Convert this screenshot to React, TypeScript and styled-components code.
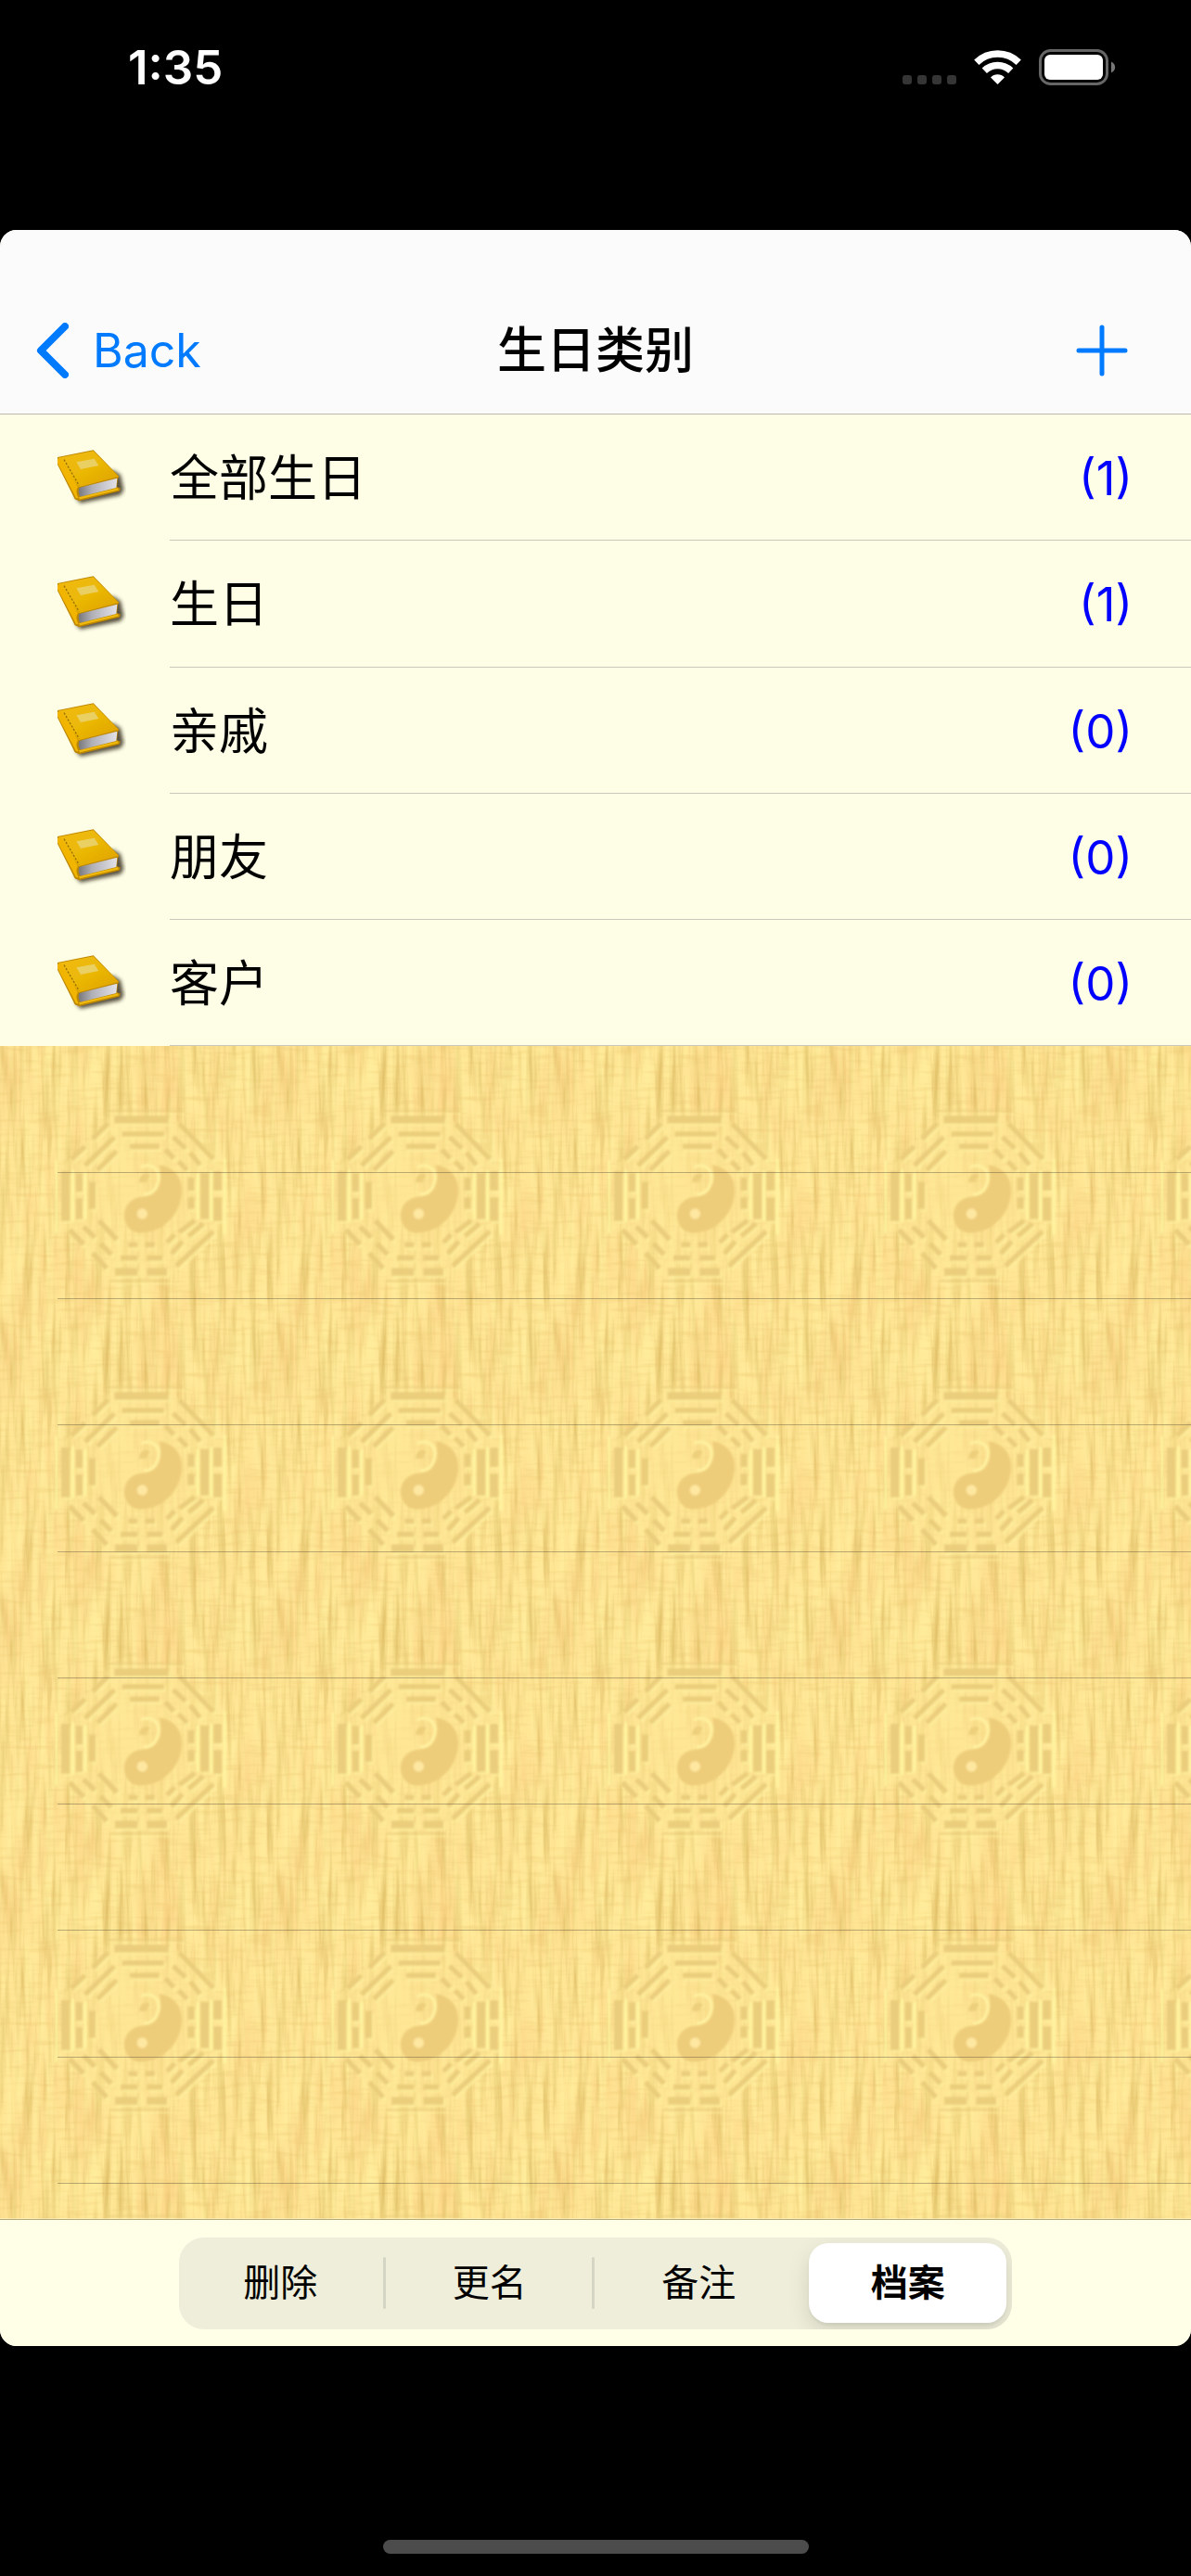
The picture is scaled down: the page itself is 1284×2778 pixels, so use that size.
import React, { useState } from "react";
import styled, { createGlobalStyle } from "styled-components";

const LATIN = `Inter, "Noto Sans CJK SC", sans-serif`;

const GlobalStyle = createGlobalStyle`
  * { box-sizing: border-box; }
  body { margin: 0; background: #000; font-family: ${LATIN}; }
  button { font: inherit; border: 0; background: none; padding: 0; cursor: pointer; }
  ul { list-style: none; margin: 0; padding: 0; }
`;

const Screen = styled.div`
  display: flex;
  flex-direction: column;
  min-height: 100vh;
  background: #000;
`;

const StatusBar = styled.header`
  display: flex;
  justify-content: space-between;
  align-items: flex-start;
  height: 248px;
  padding: 42px 81px 0 138px;
  color: #fff;
`;

const Clock = styled.time`
  font-size: 51px;
  line-height: 62px;
  font-weight: 600;
`;

const StatusIcons = styled.div`
  display: flex;
  align-items: center;
  height: 62px;
`;

const Sheet = styled.main`
  display: flex;
  flex-direction: column;
  flex: 1;
  overflow: hidden;
  border-radius: 18px;
  background: #fefee7;
`;

const NavBar = styled.nav`
  display: grid;
  grid-template-columns: 1fr auto 1fr;
  align-items: center;
  height: 199px;
  padding: 62px 38px 0;
  background: #fbfbfc;
  border-bottom: 1px solid #b9b9ad;
`;

const BackButton = styled.button`
  justify-self: start;
  display: flex;
  align-items: center;
  gap: 26px;
  color: #007aff;
  font-size: 50px;
  line-height: 64px;
`;

const Title = styled.h1`
  margin: 0;
  font-size: 53px;
  line-height: 64px;
  font-weight: 500;
`;

const AddButton = styled.button`
  justify-self: end;
  display: flex;
  padding: 0 30px;
`;

const ListArea = styled.section`
  display: flex;
  flex-direction: column;
  flex: 1;
`;

const Categories = styled.ul`
  display: flex;
  flex-direction: column;
  flex: 5 0 0px;
`;

const Category = styled.li`
  display: flex;
  flex: 1 0 0px;
  align-items: stretch;
  gap: 47px;
  min-height: 120px;
  padding-left: 62px;

  > svg { align-self: center; }
`;

const CategoryButton = styled.button`
  display: flex;
  flex: 1;
  align-items: center;
  justify-content: space-between;
  padding: 3px 63px 0 0;
  border-bottom: 1px solid #c9c9bb;
  color: #000;
  font-size: 53px;
  line-height: 64px;
`;

const Count = styled.span`
  color: #0000ff;
  font-size: 51px;
`;

const EmptyArea = styled.div`
  position: relative;
  display: flex;
  flex: 9 0 38px;
  padding-bottom: 38px;
`;

const Wood = styled.svg`
  position: absolute;
  inset: 0;
  width: 100%;
  height: 100%;
`;

const EmptyRows = styled.ul`
  position: relative;
  display: flex;
  flex-direction: column;
  flex: 1;
  padding-left: 62px;
`;

const EmptyRow = styled.li`
  flex: 1 0 0px;
  border-bottom: 1px solid rgba(70, 65, 50, 0.38);
`;

const Toolbar = styled.footer`
  display: flex;
  justify-content: center;
  height: 137px;
  padding-top: 19px;
  background: #fffee6;
  border-top: 1px solid #b8a874;
`;

const Segments = styled.div`
  display: grid;
  grid-template-columns: repeat(4, 1fr);
  gap: 3px;
  width: 70%;
  height: 99px;
  padding: 6px 0 7px;
  border-radius: 27px;
  background: #eeeeda;
  overflow: hidden;
`;

const Segment = styled.button<{ $active: boolean; $divided: boolean }>`
  position: relative;
  border-radius: 21px;
  font-size: 40px;
  line-height: 50px;
  color: #000;
  font-weight: ${(p) => (p.$active ? 600 : 400)};
  ${(p) =>
    p.$active
      ? "margin: 0 6px 0 3px; background: #fff; box-shadow: 0 9px 24px rgba(0,0,0,.12), 0 3px 3px rgba(0,0,0,.05);"
      : "padding-right: 3px;"}

  &::after {
    content: "";
    display: ${(p) => (p.$divided ? "block" : "none")};
    position: absolute;
    top: 15px;
    bottom: 15px;
    right: -1px;
    width: 3px;
    border-radius: 2px;
    background: #d5d5c6;
  }
`;

const HomeArea = styled.div`
  display: flex;
  justify-content: center;
  align-items: flex-end;
  height: 248px;
  padding-bottom: 24px;
`;

const HomeIndicator = styled.div`
  width: 459px;
  height: 15px;
  border-radius: 8px;
  background: #4c4c4c;
`;

function DeviceStatus() {
  return (
    <svg width="230" height="40" viewBox="973 53 230 40" role="img" aria-label="Wi-Fi, battery full">
      {[973, 989, 1005, 1021].map((x) => (
        <rect key={x} x={x} y="81" width="10" height="10" rx="3" fill="#353535" />
      ))}
      <g fill="none" stroke="#fff" strokeWidth="7.5">
        <path d="M1052.8 67.2 A32.5 32.5 0 0 1 1098.2 67.2" />
        <path d="M1061.3 76.2 A20.5 20.5 0 0 1 1089.7 76.2" />
      </g>
      <path d="M1068 83.5 A10.5 10.5 0 0 1 1083 83.5 L1075.5 91Z" fill="#fff" />
      <rect x="1121.5" y="54.5" width="72" height="36" rx="11" fill="none" stroke="#666" strokeWidth="3" />
      <rect x="1126" y="59" width="63" height="27" rx="6" fill="#fff" />
      <path d="M1198 66.5 C1203.5 69 1203.5 76 1198 78.5Z" fill="#777" />
    </svg>
  );
}

function Book() {
  return (
    <svg width="74" height="70" viewBox="36 15 222 210" aria-hidden="true">
      <defs>
        <linearGradient id="cover" x1="0" y1="0" x2="1" y2="1">
          <stop offset="0" stopColor="#f2ba10" />
          <stop offset=".5" stopColor="#ebb806" />
          <stop offset="1" stopColor="#dda000" />
        </linearGradient>
        <linearGradient id="pages" x1="0" x2="1">
          <stop offset="0" stopColor="#77777b" />
          <stop offset=".35" stopColor="#b0b0b6" />
          <stop offset="1" stopColor="#e2e2e8" />
        </linearGradient>
        <filter id="soft" x="-20%" y="-20%" width="140%" height="140%">
          <feGaussianBlur stdDeviation="6" />
        </filter>
        <filter id="edge"><feGaussianBlur stdDeviation="1.6" /></filter>
      </defs>
      <path d="M92 180 L110 203 L240 176 L250 160 L240 112 L215 96Z" fill="#3a3320" opacity=".85" filter="url(#soft)" />
      <g filter="url(#edge)">
        <path d="M36 54 L152 31 L236 117 L231 124 L228 150 L240 155 L236 164 L106 196 L92 190 L36 78Z" fill="#bd8600" />
        <path d="M106 153 L229 122 L226 153 L110 182 Q100 168 106 153Z" fill="url(#pages)" />
        <path d="M38 56 L152 34 L234 117 L104 151Z" fill="url(#cover)" />
        <path d="M36 60 L48 58 L102 151 Q92 166 104 186 L96 187 L36 73Z" fill="#f1b500" />
        <path d="M106 187 L232 157" stroke="#f0b90a" strokeWidth="7" />
        <path d="M57 62 L106 146" stroke="#9b7000" strokeWidth="4" strokeDasharray="7 5" />
        <path d="M97 70 L155 59 L169 81 L111 93Z" fill="#ead063" />
      </g>
    </svg>
  );
}

function TrigramMarks() {
  return (
    <>
      <path strokeWidth="5" d="M345 210H595 M355 760H545" />
      <path strokeWidth="25" d="M370 238H545 M372 731H445 M475 731H540" />
      <path strokeWidth="17" d="M395 285H530 M420 325H515 M390 686H445 M475 686H525 M415 643H445 M470 643H500" />
      <path strokeWidth="28" d="M212 405V566 M662 410V560 M704 405V468 M704 490V566" />
      <path strokeWidth="22" d="M256 412V472 M256 492V560 M298 440V527 M618 425V468 M618 490V527" />
      <path strokeWidth="16" d="M580 252L690 366 M560 295L600 332 M615 345L647 385 M535 335L562 364 M578 374L605 402" />
      <path strokeWidth="16" d="M350 250L300 300 M275 325L230 367 M370 295L275 387 M377 340L315 402" />
      <path strokeWidth="17" d="M320 565L378 627 M270 585L307 620 M325 640L360 675 M225 595L270 642 M300 670L345 720" />
      <path strokeWidth="16" d="M630 565L580 602 M565 610L540 636 M657 575L610 615 M590 632L555 672 M690 600L570 712" />
    </>
  );
}

function WoodBackground() {
  return (
    <Wood aria-hidden="true">
      <defs>
        <filter id="grain" x="0" y="0" width="100%" height="100%" colorInterpolationFilters="sRGB">
          <feTurbulence type="fractalNoise" baseFrequency="0.14 0.01" numOctaves={3} seed={7} stitchTiles="stitch" />
          <feColorMatrix values="0 0 0 0 .82  0 0 0 0 .68  0 0 0 0 .32  1.5 0 0 0 -.66" />
        </filter>
        <filter id="shine" x="0" y="0" width="100%" height="100%" colorInterpolationFilters="sRGB">
          <feTurbulence type="fractalNoise" baseFrequency="0.12 0.014" numOctaves={2} seed={21} stitchTiles="stitch" />
          <feColorMatrix values="0 0 0 0 1  0 0 0 0 .94  0 0 0 0 .62  1.6 0 0 0 -.6" />
        </filter>
        <filter id="blotch" x="0" y="0" width="100%" height="100%" colorInterpolationFilters="sRGB">
          <feTurbulence type="fractalNoise" baseFrequency="0.02 0.01" numOctaves={3} seed={4} stitchTiles="stitch" />
          <feColorMatrix values="0 0 0 0 .98  0 0 0 0 .8  0 0 0 0 .5  1.4 0 0 0 -.58" />
        </filter>
        <filter id="weave" x="0" y="0" width="100%" height="100%" colorInterpolationFilters="sRGB">
          <feTurbulence type="fractalNoise" baseFrequency="0.03 0.2" numOctaves={2} seed={12} stitchTiles="stitch" />
          <feColorMatrix values="0 0 0 0 .9  0 0 0 0 .74  0 0 0 0 .4  .7 0 0 0 -.33" />
        </filter>
        <filter id="emboss" x="-5%" y="-5%" width="110%" height="110%">
          <feGaussianBlur stdDeviation="3" />
        </filter>
        <pattern id="wood" width="298" height="298" patternUnits="userSpaceOnUse">
          <rect width="298" height="298" fill="#ffe695" />
          <rect width="298" height="298" filter="url(#blotch)" />
          <rect width="298" height="298" filter="url(#grain)" />
          <rect width="298" height="298" filter="url(#shine)" />
          <rect width="298" height="298" filter="url(#weave)" />
          <g transform="scale(.3333)" fill="none" filter="url(#emboss)">
            <path d="M360 225H555L710 385V590L550 750H365L205 590V385Z" fill="#fee594" opacity=".55" />
            <g stroke="#fff09e" opacity=".6" transform="translate(7 9)"><TrigramMarks /></g>
            <path d="M182 370V605 M727 365V610 M236 400V570 M276 410V560 M640 410V560 M684 405V565" stroke="#fff6a0" strokeWidth="7" />
            <g stroke="#e8ca78" opacity=".85"><TrigramMarks /></g>
            <path d="M515 385 C565 392 592 430 588 475 C585 540 530 605 455 605 C420 605 400 575 402 545 C404 510 430 490 460 488 C510 486 530 450 515 385Z" fill="#eecd7a" />
            <path d="M455 392 C500 375 525 410 508 450 C500 472 485 480 465 480" stroke="#fff2a0" strokeWidth="9" />
            <path d="M450 440 C452 415 470 408 485 418 L472 440Z" fill="#edcf7c" />
            <circle cx="460" cy="543" r="17" fill="#fee7a0" />
          </g>
        </pattern>
      </defs>
      <rect width="100%" height="100%" fill="url(#wood)" />
    </Wood>
  );
}

const categories = [
  { name: "全部生日", count: 1 },
  { name: "生日", count: 1 },
  { name: "亲戚", count: 0 },
  { name: "朋友", count: 0 },
  { name: "客户", count: 0 },
];

const actions = ["删除", "更名", "备注", "档案"];

export default function App() {
  const [active, setActive] = useState(3);

  return (
    <>
      <GlobalStyle />
      <Screen lang="zh-CN">
        <StatusBar>
          <Clock>1:35</Clock>
          <StatusIcons><DeviceStatus /></StatusIcons>
        </StatusBar>
        <Sheet>
          <NavBar>
            <BackButton type="button">
              <svg width="36" height="60" viewBox="0 0 36 60" aria-hidden="true">
                <path d="M32 4L6 30L32 56" fill="none" stroke="#007aff" strokeWidth="8" strokeLinecap="round" strokeLinejoin="round" />
              </svg>
              Back
            </BackButton>
            <Title>生日类别</Title>
            <AddButton type="button" aria-label="Add">
              <svg width="56" height="56" viewBox="0 0 56 56" aria-hidden="true">
                <path d="M28 3V53M3 28H53" stroke="#007aff" strokeWidth="5" strokeLinecap="round" />
              </svg>
            </AddButton>
          </NavBar>
          <ListArea>
            <Categories>
              {categories.map((c) => (
                <Category key={c.name}>
                  <Book />
                  <CategoryButton type="button">
                    <span>{c.name}</span>
                    <Count>({c.count})</Count>
                  </CategoryButton>
                </Category>
              ))}
            </Categories>
            <EmptyArea>
              <WoodBackground />
              <EmptyRows aria-hidden="true">
                {Array.from({ length: 9 }, (_, i) => <EmptyRow key={i} />)}
              </EmptyRows>
            </EmptyArea>
          </ListArea>
          <Toolbar>
            <Segments role="group" aria-label="操作">
              {actions.map((label, i) => (
                <Segment
                  key={label}
                  type="button"
                  aria-pressed={active === i}
                  $active={active === i}
                  $divided={i < actions.length - 1 && active !== i && active !== i + 1}
                  onClick={() => setActive(i)}
                >
                  {label}
                </Segment>
              ))}
            </Segments>
          </Toolbar>
        </Sheet>
        <HomeArea><HomeIndicator /></HomeArea>
      </Screen>
    </>
  );
}
